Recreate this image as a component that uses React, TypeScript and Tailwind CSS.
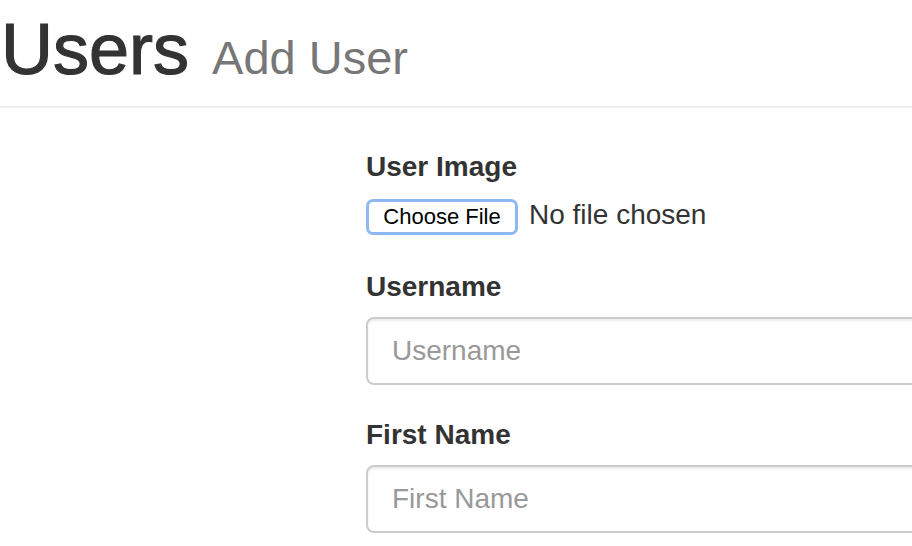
export default function App() {
  const fields = [
    { label: 'Username', placeholder: 'Username' },
    { label: 'First Name', placeholder: 'First Name' },
  ];

  return (
    <div className="w-[912px] h-[546px] overflow-hidden bg-white text-[#333] font-['Liberation_Sans',Arial,sans-serif]">
      <div className="pt-[10px] pb-[17px] border-b-2 border-[#eee]">
        <h1 className="text-[72px] leading-[79px] font-normal ml-[1px] whitespace-nowrap [-webkit-text-stroke:1.2px_#333]">
          Users{' '}
          <small className="ml-[3px] text-[47px] leading-none text-[#777] [-webkit-text-stroke:0px]">Add User</small>
        </h1>
      </div>

      <div className="flex mt-[39px]">
        <div className="w-[366px] shrink-0" />
        <form className="w-[640px] shrink-0">
          <div className="mb-[30px]">
            <label className="block text-[28px] leading-[40px] font-bold mb-[10px]">User Image</label>
            <div className="flex items-center h-[40px]">
              <button
                type="button"
                className="h-[36px] w-[152px] rounded-[7px] border-[3px] border-[#8db8f2] bg-white text-[22px] text-black leading-none"
              >
                Choose File
              </button>
              <span className="ml-[11px] text-[28px] leading-[40px] -mt-[4px]">No file chosen</span>
            </div>
          </div>

          {fields.map((f) => (
            <div key={f.label} className="mb-[30px]">
              <label className="block text-[28px] leading-[40px] font-bold mb-[10px]">{f.label}</label>
              <input
                type="text"
                placeholder={f.placeholder}
                className="block w-full h-[68px] px-[24px] text-[28px] border-2 border-[#ccc] rounded-[8px] shadow-[inset_0_2px_2px_rgba(0,0,0,0.075)] placeholder:text-[#999] outline-none"
              />
            </div>
          ))}
        </form>
      </div>
    </div>
  );
}
